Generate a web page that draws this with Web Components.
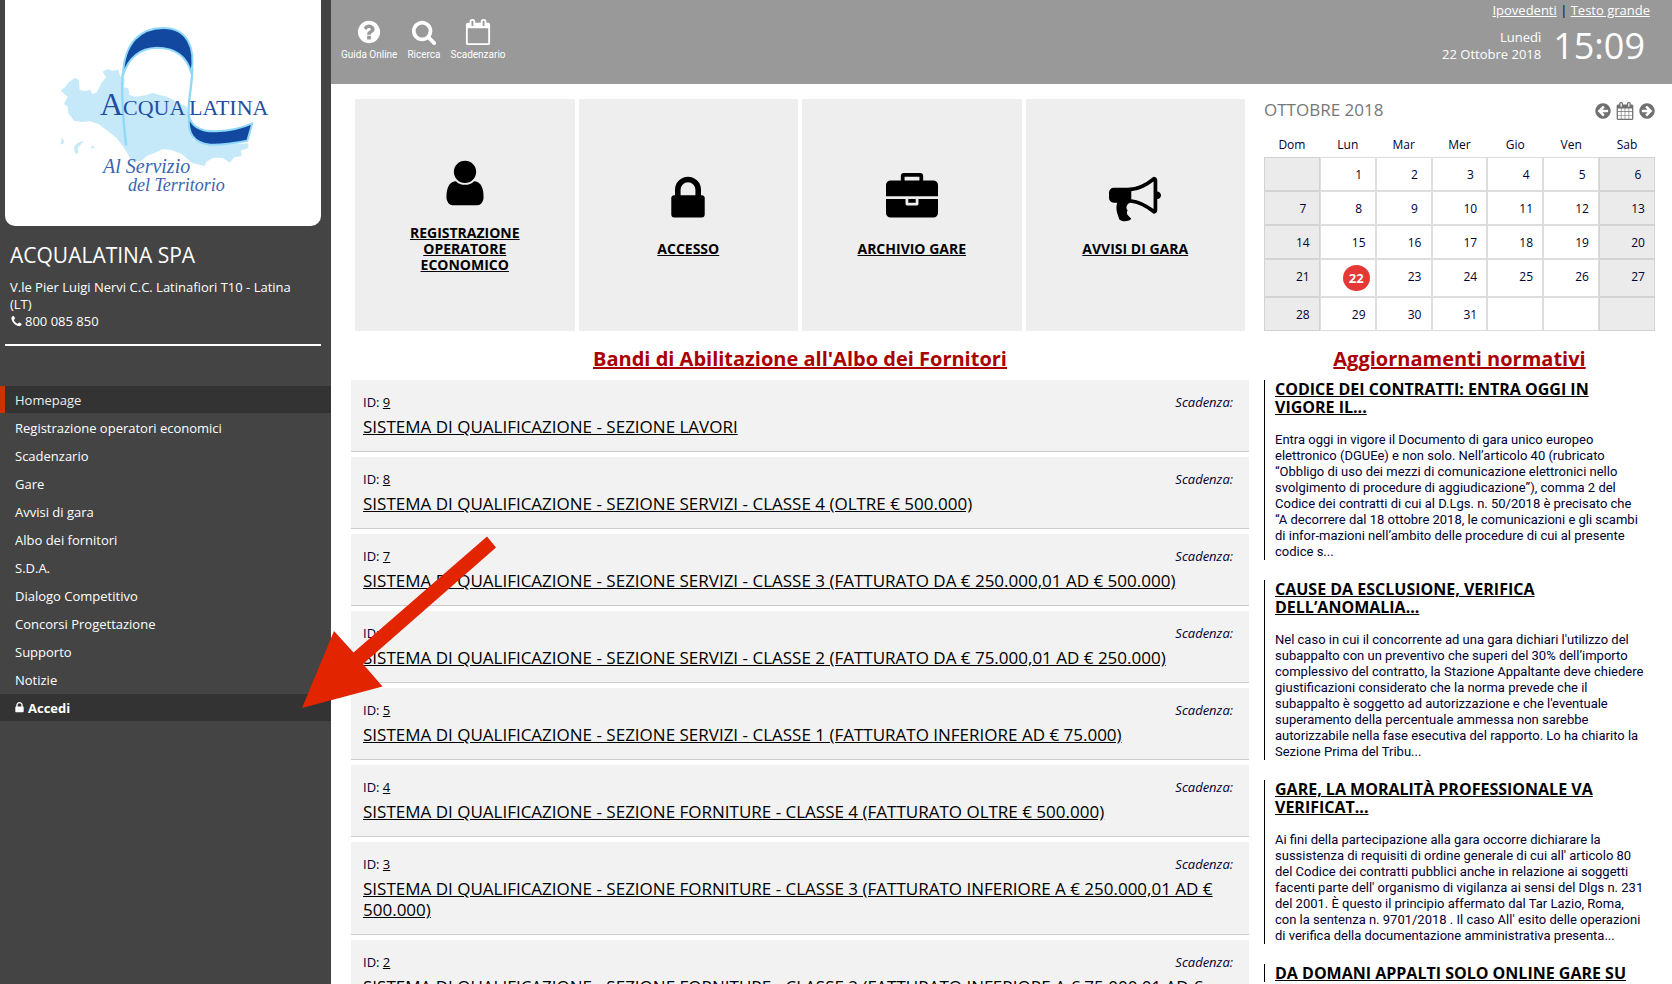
<!DOCTYPE html>
<html lang="it">
<head>
<meta charset="utf-8">
<meta name="viewport" content="width=device-width, initial-scale=1">
<title>Acqualatina SpA - Portale gare</title>
<style>
body { margin: 0; background: #fff; color: #003; font-family: "Open Sans", "Noto Sans", sans-serif; font-size: 13px; }
</style>
</head>
<body>
<portal-page>
  <portal-sidebar slot="side" name="ACQUALATINA SPA" phone="800 085 850">V.le Pier Luigi Nervi C.C. Latinafiori T10 - Latina (LT)</portal-sidebar>
  <portal-header slot="header"></portal-header>
  <quick-tiles slot="main">
    <quick-tile icon="user">REGISTRAZIONE OPERATORE ECONOMICO</quick-tile>
    <quick-tile icon="lock">ACCESSO</quick-tile>
    <quick-tile icon="briefcase">ARCHIVIO GARE</quick-tile>
    <quick-tile icon="bullhorn">AVVISI DI GARA</quick-tile>
  </quick-tiles>
  <section-title slot="main">Bandi di Abilitazione all'Albo dei Fornitori</section-title>
  <tender-item slot="main" number="9">SISTEMA DI QUALIFICAZIONE - SEZIONE LAVORI</tender-item>
  <tender-item slot="main" number="8">SISTEMA DI QUALIFICAZIONE - SEZIONE SERVIZI - CLASSE 4 (OLTRE € 500.000)</tender-item>
  <tender-item slot="main" number="7">SISTEMA DI QUALIFICAZIONE - SEZIONE SERVIZI - CLASSE 3 (FATTURATO DA € 250.000,01 AD € 500.000)</tender-item>
  <tender-item slot="main" number="6">SISTEMA DI QUALIFICAZIONE - SEZIONE SERVIZI - CLASSE 2 (FATTURATO DA € 75.000,01 AD € 250.000)</tender-item>
  <tender-item slot="main" number="5">SISTEMA DI QUALIFICAZIONE - SEZIONE SERVIZI - CLASSE 1 (FATTURATO INFERIORE AD € 75.000)</tender-item>
  <tender-item slot="main" number="4">SISTEMA DI QUALIFICAZIONE - SEZIONE FORNITURE - CLASSE 4 (FATTURATO OLTRE € 500.000)</tender-item>
  <tender-item slot="main" number="3">SISTEMA DI QUALIFICAZIONE - SEZIONE FORNITURE - CLASSE 3 (FATTURATO INFERIORE A € 250.000,01 AD € 500.000)</tender-item>
  <tender-item slot="main" number="2">SISTEMA DI QUALIFICAZIONE - SEZIONE FORNITURE - CLASSE 2 (FATTURATO INFERIORE A € 75.000,01 AD € 250.000)</tender-item>
  <month-calendar slot="aside" label="OTTOBRE 2018" days="31" offset="1" today="22"></month-calendar>
  <section-title slot="aside">Aggiornamenti normativi</section-title>
  <news-item slot="aside" heading="CODICE DEI CONTRATTI: ENTRA OGGI IN VIGORE IL...">Entra oggi in vigore il Documento di gara unico europeo elettronico (DGUEe) e non solo. Nell’articolo 40 (rubricato “Obbligo di uso dei mezzi di comunicazione elettronici nello svolgimento di procedure di aggiudicazione”), comma 2 del Codice dei contratti di cui al D.Lgs. n. 50/2018 è precisato che “A decorrere dal 18 ottobre 2018, le comunicazioni e gli scambi di infor-mazioni nell’ambito delle procedure di cui al presente codice s...</news-item>
  <news-item slot="aside" heading="CAUSE DA ESCLUSIONE, VERIFICA DELL’ANOMALIA...">Nel caso in cui il concorrente ad una gara dichiari l'utilizzo del subappalto con un preventivo che superi del 30% dell’importo complessivo del contratto, la Stazione Appaltante deve chiedere giustificazioni considerato che la norma prevede che il subappalto è soggetto ad autorizzazione e che l'eventuale superamento della percentuale ammessa non sarebbe autorizzabile nella fase esecutiva del rapporto. Lo ha chiarito la Sezione Prima del Tribu...</news-item>
  <news-item slot="aside" heading="GARE, LA MORALITÀ PROFESSIONALE VA VERIFICAT...">Ai fini della partecipazione alla gara occorre dichiarare la sussistenza di requisiti di ordine generale di cui all' articolo 80 del Codice dei contratti pubblici anche in relazione ai soggetti facenti parte dell' organismo di vigilanza ai sensi del Dlgs n. 231 del 2001. È questo il principio affermato dal Tar Lazio, Roma, con la sentenza n. 9701/2018 . Il caso All' esito delle operazioni di verifica della documentazione amministrativa presenta...</news-item>
  <news-item slot="aside" heading="DA DOMANI APPALTI SOLO ONLINE GARE SU"></news-item>
  <pointer-arrow slot="overlay"></pointer-arrow>
</portal-page>

<script>
const CIRCLE = 'm256-64q0 209-103 385.5t-279.5 279.5-385.5 103-385.5-103-279.5-279.5-103-385.5 103-385.5 279.5-279.5 385.5-103 385.5 103 279.5 279.5 103 385.5z';
const CAL_FRAME = 'm384-64v1280q0 52-38 90t-90 38h-1408q-52 0-90-38t-38-90v-1280q0-52 38-90t90-38h128v-96q0-66 47-113t113-47h64q66 0 113 47t47 113v96h384v-96q0-66 47-113t113-47h64q66 0 113 47t47 113v96h128q52 0 90 38t38 90z';
const ARROW = 'M1408 960v-128q0-26-19-45t-45-19h-502l189-189q19-19 19-45t-19-45l-91-91q-18-18-45-18t-45 18l-362 362-91 91q-18 18-18 45t18 45l91 91 362 362q18 18 45 18t45-18l91-91q18-18 18-45t-18-45l-189-189h502q26 0 45-19t19-45z' + CIRCLE;
const ICONS = {
  user: 'M1536 1399q0 109-62.5 187t-150.5 78h-854q-88 0-150.5-78t-62.5-187q0-85 8.5-160.5t31.5-152 58.5-131 94-89 134.5-34.5q131 128 313 128t313-128q76 0 134.5 34.5t94 89 58.5 131 31.5 152 8.5 160.5zm-256-887q0 159-112.5 271.5t-271.5 112.5-271.5-112.5-112.5-271.5 112.5-271.5 271.5-112.5 271.5 112.5 112.5 271.5z',
  lock: 'M640 768h512v-192q0-106-75-181t-181-75-181 75-75 181v192zm832 96v576q0 40-28 68t-68 28h-960q-40 0-68-28t-28-68v-576q0-40 28-68t68-28h32v-192q0-184 132-316t316-132 316 132 132 316v192h32q40 0 68 28t28 68z',
  briefcase: 'M640 256h512v-128h-512v128zm1152 640v480q0 66-47 113t-113 47h-1472q-66 0-113-47t-47-113v-480h672v160q0 26 19 45t45 19h320q26 0 45-19t19-45v-160h672zm-768 0v128h-256v-128h256zm768-480v384h-1792v-384q0-66 47-113t113-47h352v-160q0-40 28-68t68-28h576q40 0 68 28t28 68v160h352q66 0 113 47t47 113z',
  bullhorn: 'M1664 640q53 0 90.5 37.5t37.5 90.5-37.5 90.5-90.5 37.5v384q0 52-38 90t-90 38q-417-347-812-380-58 19-91 66t-31 100.5 40 92.5q-20 33-23 65.5t6 58 33.5 55 48 50 61.5 50.5q-29 58-111.5 83t-168.5 11.5-132-55.5q-7-23-29.5-87.5t-32-94.5-23-89-15-101 3.5-98.5 22-110.5h-122q-66 0-113-47t-47-113v-192q0-66 47-113t113-47h480q435 0 896-384 52 0 90 38t38 90v384zm-128 604v-954q-394 302-768 343v270q377 42 768 341z',
  question: 'M1024 1376v-192q0-14-9-23t-23-9h-192q-14 0-23 9t-9 23v192q0 14 9 23t23 9h192q14 0 23-9t9-23zm256-672q0-88-55.5-163t-138.5-116-170-41q-243 0-371 213-15 24 8 42l132 100q7 6 19 6 16 0 25-12 53-68 86-92 34-24 86-24 48 0 85.5 26t37.5 59q0 38-20 61t-68 45q-63 28-115.5 86.5t-52.5 125.5v36q0 14 9 23t23 9h192q14 0 23-9t9-23q0-19 21.5-49.5t54.5-49.5q32-18 49-28.5t46-35 44.5-48 28-60.5 12.5-81zm384 192q0 209-103 385.5t-279.5 279.5-385.5 103-385.5-103-279.5-279.5-103-385.5 103-385.5 279.5-279.5 385.5-103 385.5 103 279.5 279.5 103 385.5z',
  search: 'M1216 832q0-185-131.5-316.5t-316.5-131.5-316.5 131.5-131.5 316.5 131.5 316.5 316.5 131.5 316.5-131.5 131.5-316.5zm512 832q0 52-38 90t-90 38q-54 0-90-38l-343-342q-179 124-399 124-143 0-273.5-55.5t-225-150-150-225-55.5-273.5 55.5-273.5 150-225 225-150 273.5-55.5 273.5 55.5 225 150 150 225 55.5 273.5q0 220-124 399l343 343q37 37 37 90z',
  agenda: 'M192 1664h1408v-1024h-1408v1024zm384-1216v-288q0-14-9-23t-23-9h-64q-14 0-23 9t-9 23v288q0 14 9 23t23 9h64q14 0 23-9t9-23zm768 0v-288q0-14-9-23t-23-9h-64q-14 0-23 9t-9 23v288q0 14 9 23t23 9h64q14 0 23-9t9-23z' + CAL_FRAME,
  calendar: 'M192 1664h288v-288h-288v288zm352 0h320v-288h-320v288zm-352-352h288v-320h-288v320zm352 0h320v-320h-320v320zm-352-384h288v-288h-288v288zm736 736h320v-288h-320v288zm-384-736h320v-288h-320v288zm768 736h288v-288h-288v288zm-384-352h320v-320h-320v320zm-352-864v-288q0-13-9.5-22.5t-22.5-9.5h-64q-13 0-22.5 9.5t-9.5 22.5v288q0 13 9.5 22.5t22.5 9.5h64q13 0 22.5-9.5t9.5-22.5zm736 864h288v-320h-288v320zm-384-384h320v-288h-320v288zm384 0h288v-288h-288v288zm32-480v-288q0-13-9.5-22.5t-22.5-9.5h-64q-13 0-22.5 9.5t-9.5 22.5v288q0 13 9.5 22.5t22.5 9.5h64q13 0 22.5-9.5t9.5-22.5z' + CAL_FRAME,
  previous: ARROW,
  next: ARROW,
  phone: 'M1600 1240q0 27-10 70.5t-21 68.5q-21 50-122 106-94 51-186 51-27 0-53-3.5t-57.5-12.5-47-14.5-55.5-20.5-49-18q-98-35-175-83-127-79-264-216t-216-264q-48-77-83-175-3-9-18-49t-20.5-55.5-14.5-47-12.5-57.5-3.5-53q0-92 51-186 56-101 106-122 25-11 68.5-21t70.5-10q14 0 21 3 18 6 53 76 11 19 30 54t35 63.5 31 53.5q3 4 17.5 25t21.5 35.5 7 28.5q0 20-28.5 50t-62 55-62 53-28.5 46q0 9 5 22.5t8.5 20.5 14 24 11.5 19q76 137 174 235t235 174q2 1 19 11.5t24 14 20.5 8.5 22.5 5q18 0 46-28.5t53-62 55-62 50-28.5q14 0 28.5 7t35.5 21.5 25 17.5q25 15 53.5 31t63.5 35 54 30q70 35 76 53 3 7 3 21z'
};

function define(name, render) {
  customElements.define(name, class extends HTMLElement {
    constructor() { super(); this.attachShadow({ mode: 'open' }); }
    connectedCallback() { this.shadowRoot.innerHTML = render(this); }
  });
}

define('ui-icon', el => {
  const name = el.getAttribute('name');
  const flip = name === 'next' ? ' transform="matrix(-1 0 0 1 1792 0)"' : '';
  return `<style>
    :host { display: block; flex: none; width: var(--icon-size, 26px); height: var(--icon-size, 26px); }
    svg { display: block; width: 100%; height: 100%; overflow: visible; fill: currentColor; }
  </style>
  <svg viewBox="0 0 1792 1792" aria-hidden="true"><path${flip} d="${ICONS[name]}"/></svg>`;
});

define('portal-page', () => `<style>
    :host { display: grid; position: relative; grid-template-columns: 331px minmax(0, 1fr); min-height: 100vh; overflow: hidden; }
    .columns { display: grid; grid-template-columns: minmax(0, 1fr) 391px; gap: 15px; padding: 15px 17px 20px 20px; }
  </style>
  <slot name="side"></slot>
  <div>
    <slot name="header"></slot>
    <div class="columns">
      <main><slot name="main"></slot></main>
      <aside><slot name="aside"></slot></aside>
    </div>
  </div>
  <slot name="overlay"></slot>`);

define('brand-logo', () => `<style>
    :host { display: block; background: #fff; border-radius: 0 0 10px 10px; }
    svg { display: block; width: 100%; }
    text { font-family: "Liberation Serif", serif; font-weight: 400; fill: #1f4ea3; }
    .motto { font-style: italic; fill: #3a66b0; }
  </style>
  <svg viewBox="5 0 316 226" role="img" aria-label="Acqualatina, al servizio del territorio">
    <g transform="scale(.33333)">
      <path fill="#c6e9fa" d="M182 272L196 260 205 248 225 233 237 240 239 271 258 273 272 269 277 283 290 277 305 248 318 232 308 215 322 207 336 212 355 209 360 228 374 236 372 262 385 265 388 284 402 290 420 289 440 285 458 278 480 286 498 289 520 300 560 320 566 350 580 420 630 436 745 430 745 444 722 452 725 468 703 472 690 488 668 474 640 473 618 486 615 498 598 494 575 488 560 475 545 462 515 450 488 448 465 458 440 468 425 482 395 487 385 465 370 440 350 415 320 390 295 372 270 364 245 366 222 362 205 340 203 320 192 312 203 290Z"/>
      <path fill="#c6e9fa" d="M183 412q12 8 8 18l-10 4q6-10 2-22zM252 423q-20 2-30 18 0 12 6 22l8-6-4-12q10-10 20-22zM272 440l8-3 4 6-8 3z"/>
      <g stroke="#8fd8f8" fill="none" stroke-linejoin="round">
        <path stroke-width="7" d="M368 220C362 300 371 360 378 436M577 205C576 265 563 300 566 352"/>
        <path fill="#12489f" stroke-width="6" d="M369 225C372 130 420 84 490 84C560 84 588 140 574 220C560 165 520 143 470 143C415 145 385 175 369 225Z"/>
        <path fill="#12489f" stroke-width="6" d="M567 348C575 385 610 395 650 394C690 392 730 382 757 370L742 422C700 430 665 436 630 434C580 428 562 400 567 348Z"/>
      </g>
    </g>
    <text x="100" y="115" font-size="32">A</text>
    <text x="123" y="115" font-size="22">CQUA</text>
    <text x="189" y="115" font-size="22">LATINA</text>
    <text class="motto" x="103" y="173" font-size="20">Al Servizio</text>
    <text class="motto" x="128" y="191" font-size="18">del Territorio</text>
  </svg>`);

define('side-link', el => `<style>
    :host { display: block; }
    a { display: flex; align-items: center; gap: 4px; height: 27px; padding-left: 10px; border-left: 5px solid transparent; color: #fff; text-decoration: none; --icon-size: 13px; }
    :host([current]) a { background: #333; border-left-color: #c30; color: #ededed; }
    :host([login]) a { background: #333; border-left-color: #333; font-weight: 700; }
    ui-icon { margin: 0 -2px; }
  </style>
  <a href="#">${el.hasAttribute('login') ? '<ui-icon name="lock"></ui-icon>' : ''}<slot></slot></a>`);

define('portal-sidebar', el => `<style>
    :host { display: block; background: #444; color: #fff; font-weight: 500; }
    .head { margin: 0 10px 40px 5px; padding-bottom: 14px; border-bottom: 2px solid #fff; }
    .info { padding: 15px 15px 0 5px; line-height: 17px; }
    h1 { margin: 0 0 10px; font-size: 21px; line-height: 28px; font-weight: 500; }
    .phone { display: flex; align-items: center; gap: 2px; --icon-size: 13px; }
    nav { display: grid; gap: 1px; }
  </style>
  <div class="head">
    <brand-logo></brand-logo>
    <div class="info">
      <h1>${el.getAttribute('name')}</h1>
      <div><slot></slot></div>
      <div class="phone"><ui-icon name="phone"></ui-icon><span>${el.getAttribute('phone')}</span></div>
    </div>
  </div>
  <nav>
    <side-link current>Homepage</side-link>
    ${['Registrazione operatori economici', 'Scadenzario', 'Gare', 'Avvisi di gara', 'Albo dei fornitori', 'S.D.A.', 'Dialogo Competitivo', 'Concorsi Progettazione', 'Supporto', 'Notizie'].map(t => `<side-link>${t}</side-link>`).join('')}
    <side-link login>Accedi</side-link>
  </nav>`);

define('tool-link', el => `<style>
    :host { display: block; }
    a { display: grid; justify-items: center; gap: 4px; color: #fff; text-decoration: none; font: 10px/12px Roboto, sans-serif; }
  </style>
  <a href="#"><ui-icon name="${el.getAttribute('icon')}"></ui-icon><slot></slot></a>`);

define('portal-header', () => `<style>
    :host { display: flex; justify-content: space-between; height: 84px; background: #999; color: #fff; font-weight: 500; }
    .tools { display: flex; align-items: flex-start; gap: 10px; padding: 19px 10px 0; }
    .right { display: grid; justify-items: end; align-content: start; gap: 8px; padding: 1px 22px 0 0; }
    .access { line-height: 18px; color: #003; }
    .access a { color: #fff; }
    .now { display: flex; align-items: center; gap: 12px; padding-right: 5px; text-align: right; line-height: 17px; }
    time { font-size: 36px; line-height: 38px; font-weight: 400; }
  </style>
  <div class="tools">
    <tool-link icon="question">Guida Online</tool-link>
    <tool-link icon="search">Ricerca</tool-link>
    <tool-link icon="agenda">Scadenzario</tool-link>
  </div>
  <div class="right">
    <div class="access"><a href="#">Ipovedenti</a> | <a href="#">Testo grande</a></div>
    <div class="now"><div>Lunedì<br>22 Ottobre 2018</div><time>15:09</time></div>
  </div>`);

define('quick-tiles', () => `<style>
    :host { display: grid; grid-template-columns: repeat(4, minmax(0, 1fr)); gap: 4px; margin: 0 4px; }
  </style><slot></slot>`);

define('quick-tile', el => `<style>
    :host { display: block; }
    a { display: flex; flex-direction: column; align-items: center; justify-content: center; gap: 16px; box-sizing: border-box; height: 232px; padding: 0 40px; background: #eee; color: #000; font-size: 14px; line-height: 16px; font-weight: 700; text-align: center; --icon-size: 52px; }
  </style>
  <a href="#"><ui-icon name="${el.getAttribute('icon')}"></ui-icon><span><slot></slot></span></a>`);

define('section-title', () => `<style>
    :host { display: block; }
    h2 { margin: 15px 0 8px; font-size: 20px; line-height: 26px; font-weight: 700; text-align: center; }
    a { color: #a00; }
  </style>
  <h2><a href="#"><slot></slot></a></h2>`);

define('tender-item', el => `<style>
    :host { display: block; margin-bottom: 5px; padding: 14px 16px 14px 12px; background: #f2f2f2; border-bottom: 1px solid #ccc; }
    .meta { display: flex; justify-content: space-between; line-height: 16px; margin-bottom: 6px; }
    a { color: #000; }
    .title { font-size: 17px; line-height: 21px; }
  </style>
  <div class="meta"><span>ID: <a href="#">${el.getAttribute('number')}</a></span><em>Scadenza:</em></div>
  <div class="title"><a href="#"><slot></slot></a></div>`);

define('month-calendar', el => {
  const days = +el.getAttribute('days'), offset = +el.getAttribute('offset'), today = +el.getAttribute('today');
  let rows = '';
  for (let start = 1 - offset; start <= days; start += 7) {
    rows += '<tr>';
    for (let d = start; d < start + 7; d++) {
      const weekend = d === start || d === start + 6 ? ' class="off"' : '';
      const text = d > 0 && d <= days ? `<span${d === today ? ' class="today"' : ''}>${d}</span>` : '';
      rows += `<td${weekend}>${text}</td>`;
    }
    rows += '</tr>';
  }
  return `<style>
    :host { display: block; }
    .bar { display: flex; align-items: center; justify-content: space-between; height: 24px; line-height: 22px; margin-right: -1px; font-size: 17px; color: #777; }
    .label { height: 24px; }
    .nav { display: flex; gap: 4px; color: #707070; --icon-size: 18px; }
    button { display: block; padding: 0; border: 0; background: none; color: inherit; }
    table { width: 100%; table-layout: fixed; border-collapse: separate; border-spacing: 0; font-size: 12px; font-weight: 500; }
    th { height: 34px; padding: 10px 0 0; box-sizing: border-box; line-height: 24px; font-weight: 500; }
    td { height: 22px; padding: 5px; border: 1px solid #ddd; text-align: right; vertical-align: top; line-height: 22px; }
    td.off { background: #ebebeb; border-color: #d3d3d3; }
    td span { display: inline-block; width: 22px; height: 22px; line-height: 24px; text-align: center; vertical-align: top; }
    td .today { width: 27px; height: 26px; line-height: 26px; border-radius: 50%; background: #e53935; color: #fff; font-size: 13px; font-weight: 700; }
  </style>
  <div class="bar"><div class="label">${el.getAttribute('label')}</div>
    <div class="nav">
      <button aria-label="Mese precedente"><ui-icon name="previous"></ui-icon></button>
      <button aria-label="Mese corrente"><ui-icon name="calendar"></ui-icon></button>
      <button aria-label="Mese successivo"><ui-icon name="next"></ui-icon></button>
    </div>
  </div>
  <table>
    <thead><tr>${['Dom', 'Lun', 'Mar', 'Mer', 'Gio', 'Ven', 'Sab'].map(d => `<th scope="col">${d}</th>`).join('')}</tr></thead>
    <tbody>${rows}</tbody>
  </table>`;
});

define('news-item', el => `<style>
    :host { display: block; margin-bottom: 20px; padding: 0 10px; border-left: 1px solid #000; }
    h3 { margin: 0 0 16px; font-size: 16px; line-height: 18px; font-weight: 700; }
    a { color: #000; }
    p { margin: 0; font: 13px/16px Roboto, sans-serif; }
  </style>
  <h3><a href="#">${el.getAttribute('heading')}</a></h3>
  <p><slot></slot></p>`);

// Annotation that floats above the page and points at the login entry.
define('pointer-arrow', () => `<style>
    :host { display: block; position: absolute; left: 302px; top: 536px; width: 195px; height: 172px; pointer-events: none; }
    svg { display: block; }
  </style>
  <svg width="195" height="172" viewBox="302 536 195 172" aria-hidden="true"><path fill="#e22400" d="M302 708L334 631 353.500 652.500 487 536.500 496 547.500 363 664 382.500 686.500Z"/></svg>`);
</script>
</body>
</html>
